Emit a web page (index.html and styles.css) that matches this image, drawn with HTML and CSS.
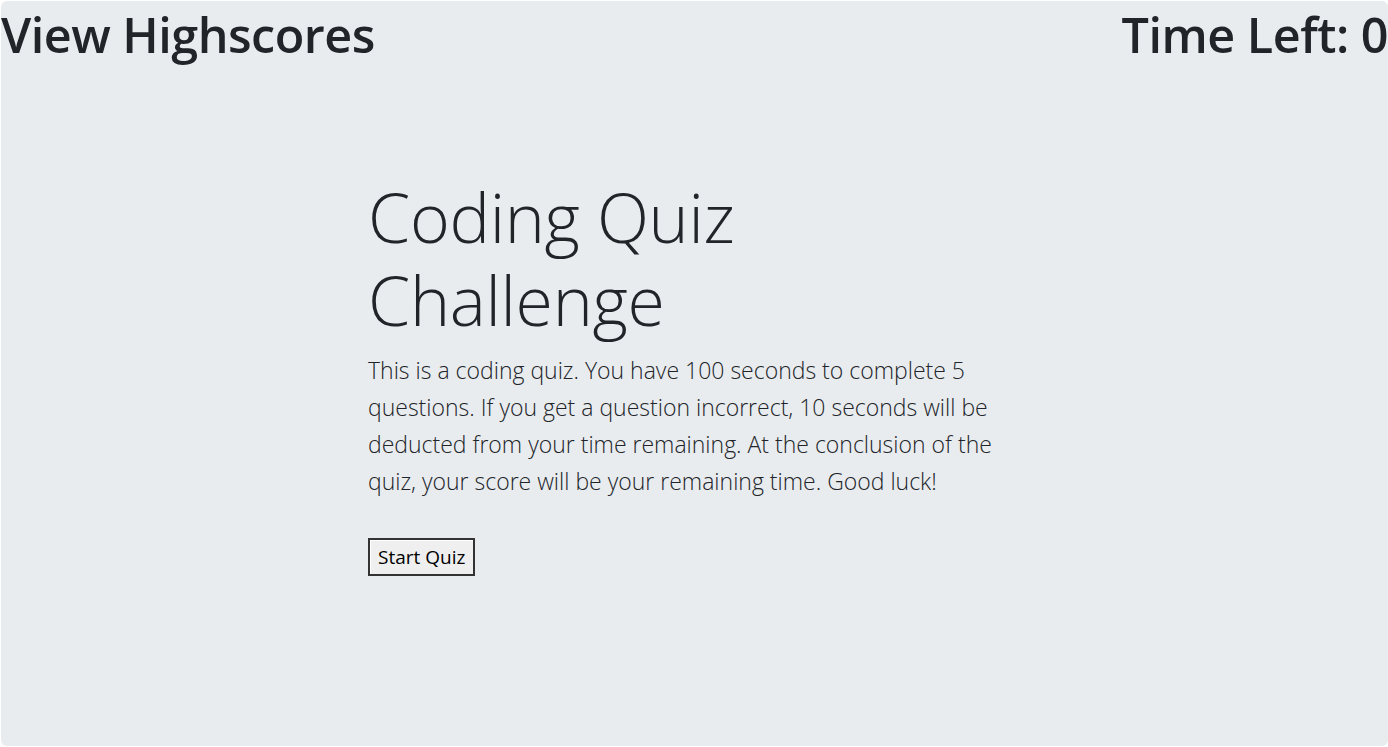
FILE: index.html
```html
<!DOCTYPE html>
<html lang="en">
<head>
<meta charset="utf-8">
<title>Coding Quiz</title>
<link rel="stylesheet" href="styles.css">
</head>
<body>
<div class="jumbotron">
  <header class="topbar">
    <h1 class="top-link">View Highscores</h1>
    <h1 class="timer">Time Left: 0</h1>
  </header>
  <main class="intro">
    <h2 class="display">Coding Quiz Challenge</h2>
    <p class="lead">This is a coding quiz. You have 100 seconds to complete 5 questions. If you get a question incorrect, 10 seconds will be deducted from your time remaining. At the conclusion of the quiz, your score will be your remaining time. Good luck!</p>
    <button class="start">Start Quiz</button>
  </main>
</div>
</body>
</html>
```
FILE: styles.css
```css
html, body {
  margin: 0;
  padding: 0;
  background: #ffffff;
}
body {
  font-family: "Open Sans", "Noto Sans", sans-serif;
  color: #212529;
}
.jumbotron {
  box-sizing: border-box;
  margin: 1px 0 1px 1px;
  height: 745px;
  background: #e9ecef;
  border-radius: 6px;
  overflow: hidden;
}
.topbar {
  display: flex;
  justify-content: space-between;
  align-items: flex-start;
}
.top-link, .timer {
  margin: 0;
  font-size: 48.5px;
  font-weight: 600;
  line-height: 66px;
  letter-spacing: -0.5px;
}
.intro {
  width: 652px;
  margin: 108px 0 0 367px;
}
.display {
  margin: 0 0 11px;
  font-size: 68px;
  font-weight: 300;
  line-height: 83px;
  letter-spacing: -0.3px;
}
.lead {
  margin: 0 0 38px;
  font-size: 23px;
  font-weight: 300;
  line-height: 37px;
}
.start {
  font-family: inherit;
  font-size: 19px;
  color: #000;
  background: #efefef;
  border: 2px solid #333;
  padding: 3px 8px 4px;
  height: 38px;
  box-shadow: inset 1px 1px 0 #fff;
}
```
